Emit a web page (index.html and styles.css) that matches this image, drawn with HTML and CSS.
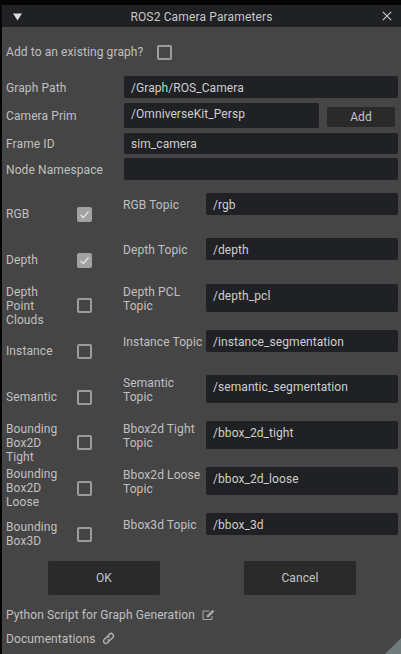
FILE: index.html
```html
<!DOCTYPE html>
<html lang="en">
<head>
<meta charset="utf-8">
<title>ROS2 Camera Parameters</title>
<link rel="stylesheet" href="styles.css">
</head>
<body>
<div class="window">
  <header class="titlebar">
    <svg class="collapse" width="9" height="8" viewBox="0 0 10 8"><path d="M0 0h10L5 8z" fill="#dcdcdc"/></svg>
    <span class="title">ROS2 Camera Parameters</span>
    <svg class="close" width="10" height="10" viewBox="0 0 10 10"><path d="M.8.800l8.400 8.400M9.200.800L.8 9.200" stroke="#cfcfcf" stroke-width="1.100" fill="none"/></svg>
  </header>
  <main class="content">
    <div class="existing"><span>Add to an existing graph?</span><i class="cb"></i></div>
    <div class="general">
      <div class="grow r1"><label>Graph Path</label><div class="field">/Graph/ROS_Camera</div></div>
      <div class="grow r2"><label>Camera Prim</label><div class="field prim">/OmniverseKit_Persp</div><button class="add">Add</button></div>
      <div class="grow r3"><label>Frame ID</label><div class="field">sim_camera</div></div>
      <div class="grow r4"><label>Node Namespace</label><div class="field"></div></div>
    </div>
    <div class="topics">
      <div class="row"><label class="name">RGB</label><span class="cbw"><i class="cb on"><svg viewBox="0 0 15 15"><path d="M3.500 7.800l2.800 2.700 5.200-6" stroke="#e2e2e2" stroke-width="1.300" fill="none"/></svg></i></span><label class="tn single">RGB Topic</label><div class="field tf">/rgb</div></div>
      <div class="row"><label class="name">Depth</label><span class="cbw"><i class="cb on"><svg viewBox="0 0 15 15"><path d="M3.500 7.800l2.800 2.700 5.200-6" stroke="#e2e2e2" stroke-width="1.300" fill="none"/></svg></i></span><label class="tn single">Depth Topic</label><div class="field tf">/depth</div></div>
      <div class="row"><label class="name">Depth<br>Point<br>Clouds</label><span class="cbw"><i class="cb"></i></span><label class="tn">Depth PCL<br>Topic</label><div class="field tf tall">/depth_pcl</div></div>
      <div class="row"><label class="name">Instance</label><span class="cbw"><i class="cb"></i></span><label class="tn single">Instance Topic</label><div class="field tf">/instance_segmentation</div></div>
      <div class="row"><label class="name">Semantic</label><span class="cbw"><i class="cb"></i></span><label class="tn">Semantic<br>Topic</label><div class="field tf tall">/semantic_segmentation</div></div>
      <div class="row"><label class="name">Bounding<br>Box2D<br>Tight</label><span class="cbw"><i class="cb"></i></span><label class="tn">Bbox2d Tight<br>Topic</label><div class="field tf tall">/bbox_2d_tight</div></div>
      <div class="row"><label class="name">Bounding<br>Box2D<br>Loose</label><span class="cbw"><i class="cb"></i></span><label class="tn">Bbox2d Loose<br>Topic</label><div class="field tf tall">/bbox_2d_loose</div></div>
      <div class="row"><label class="name">Bounding<br>Box3D</label><span class="cbw"><i class="cb"></i></span><label class="tn single">Bbox3d Topic</label><div class="field tf">/bbox_3d</div></div>
    </div>
    <div class="actions"><button>OK</button><button>Cancel</button></div>
    <div class="link l1"><span>Python Script for Graph Generation</span>
      <svg width="13" height="12" viewBox="0 0 13 12"><path d="M10 7v3.500H1V2h6.500" stroke="#a8a8a8" fill="none"/><path d="M4.500 8.500l.5-2.300L10.700.7l1.700 1.700L6.800 8z" fill="#a8a8a8"/></svg></div>
    <div class="link l2"><span>Documentations</span>
      <svg width="13" height="13" viewBox="0 0 13 13"><g fill="none" stroke="#adadad" stroke-width="1.500"><path d="M5.500 4.200l2-2a2.300 2.300 0 0 1 3.300 3.300l-2 2a2.300 2.300 0 0 1-3.300 0"/><path d="M7.500 8.800l-2 2a2.300 2.300 0 0 1-3.300-3.300l2-2a2.300 2.300 0 0 1 3.300 0"/></g></svg></div>
  </main>
  <div class="grip"></div>
</div>
</body>
</html>
```
FILE: styles.css
```css
* { box-sizing: border-box; }
html, body { margin: 0; height: 100%; }
body { background: #060606; overflow: hidden; font: 12px/14px Roboto, "Liberation Sans", sans-serif; letter-spacing: .1px; color: #c0c0c0; }
.window { position: relative; margin: 5px 0 0 2px; height: 649px; background: #454545; overflow: hidden; }
.titlebar { height: 22px; background: #1f2124; display: flex; align-items: center; justify-content: center; position: relative; }
.title { color: #c8c8c8; letter-spacing: .15px; padding-top: 1px; }
.collapse { position: absolute; left: 11px; top: 8px; }
.close { position: absolute; right: 9px; top: 6px; }
.content { padding: 0 3px 0 4px; }
label { display: block; white-space: nowrap; }
.existing { height: 49px; display: flex; align-items: center; padding-top: 1px; gap: 14px; }
.cb { display: block; width: 15px; height: 15px; border: 2px solid #9c9c9c; border-radius: 2px; flex: none; }
.cb.on { background: #a2a2a2; border: 0; }
.cb svg { display: block; }
.general { display: flex; flex-direction: column; }
.grow { display: flex; align-items: center; }
.grow label { width: 118px; flex: none; padding-top: 1px; }
.field { height: 22px; flex: 1; background: #1f2124; border-radius: 2px; padding: 1px 7px 0; color: #cfcfcf; line-height: 22px; white-space: nowrap; letter-spacing: .07px; }
.r1 { height: 22px; }
.r2 { height: 25px; margin-top: 5px; }
.r3 { height: 21px; margin-top: 5px; }
.r4 { height: 22px; margin-top: 4px; }
.r3 .field { height: 21px; line-height: 21px; }
.grow .prim { height: 25px; flex: none; width: 195px; padding-top: 0; line-height: 22px; }
.add { width: 68px; height: 20px; margin: 2px 3px 0 8px; padding-top: 1px; }
button { background: #2a2a2a; color: #c4c4c4; border: 0; border-radius: 2px; font: inherit; letter-spacing: inherit; padding: 0; }
.topics { margin-top: 11.500px; }
.row { display: flex; align-items: flex-start; height: 45.700px; padding-top: 1.200px; }
.name { width: 71px; flex: none; align-self: center; margin-top: -1.200px; }
.cbw { width: 46px; flex: none; align-self: center; display: block; margin-top: -1.200px; }
.tn { width: 83px; flex: none; padding-top: 1px; }
.tn.single { padding-top: 5px; }
.tall { height: 28px; }
.actions { display: flex; justify-content: space-between; padding: 0 42px; margin-top: 3.900px; }
.actions button { width: 112px; height: 34px; padding-top: 1px; }
.link { display: flex; align-items: center; gap: 7px; height: 14px; }
.link span { padding-top: 1px; }
.l1 { margin-top: 13px; }
.l2 { margin-top: 10px; gap: 6px; }
.grip { position: absolute; right: 0; bottom: 0; width: 0; height: 0; border-style: solid; border-width: 0 0 16px 16px; border-color: transparent transparent #6f7b7b transparent; }
```
